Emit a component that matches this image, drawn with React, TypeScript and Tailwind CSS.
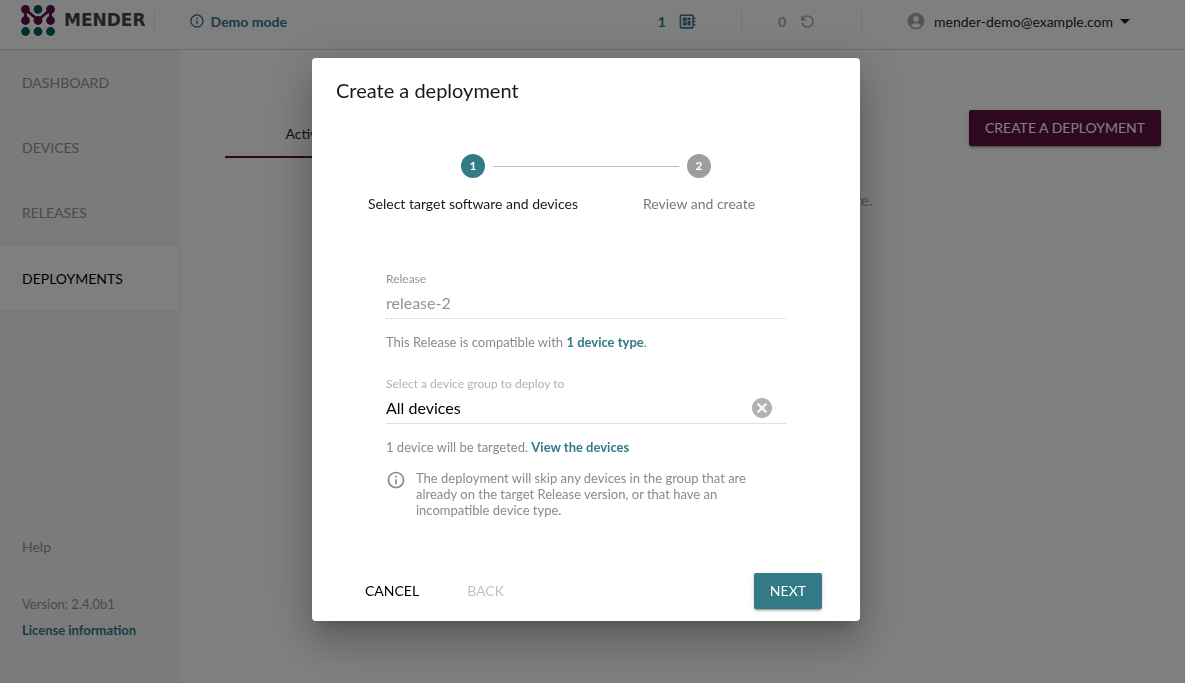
import React, { useState } from 'react';
import {
  MdAccountCircle,
  MdArrowDropDown,
  MdCancel,
  MdDeveloperBoard,
  MdInfoOutline,
  MdRefresh,
} from 'react-icons/md';

const navItems = ['Dashboard', 'Devices', 'Releases', 'Deployments'];

function Logo() {
  return (
    <a href="#home" aria-label="Mender" className="flex items-center gap-2">
      <svg width="36" height="34" viewBox="0 0 36 34" aria-hidden="true">
        <path d="M5.5 16.5V5.5L18 16L30.5 5.5V16.5" fill="none" stroke="#5d0f43" strokeWidth="2.8" />
        <g fill="#5d0f43">
          <circle cx="5.5" cy="5.3" r="4.4" />
          <circle cx="30.5" cy="5.3" r="4.4" />
          <circle cx="5.5" cy="16.5" r="4.4" />
          <circle cx="18" cy="16.5" r="4.4" />
          <circle cx="30.5" cy="16.5" r="4.4" />
        </g>
        <g fill="#015969">
          <circle cx="18" cy="5.3" r="4.4" />
          <circle cx="5.5" cy="27.5" r="4.4" />
          <circle cx="18" cy="27.5" r="4.4" />
          <circle cx="30.5" cy="27.5" r="4.4" />
        </g>
      </svg>
      <span className="font-['DejaVu_Sans'] text-[17px] font-bold text-[#444]">MENDER</span>
    </a>
  );
}

function Header() {
  return (
    <header className="flex h-[50px] items-start justify-between border-b border-[#d4d4d4] pt-[3px] pr-12 pl-5">
      <div className="flex h-9 items-center">
        <Logo />
        <span className="ml-2 h-6 w-px bg-[#eaeaea]" />
        <a href="#demo" className="ml-[34px] flex items-center gap-[6px] text-[14px] font-bold text-[#337a87]">
          <MdInfoOutline size={16} />
          Demo mode
        </a>
      </div>
      <div className="flex h-9 items-center">
        <a href="#devices" className="flex items-center gap-3 pr-11 text-[14px] font-bold text-[#337a87]">
          1
          <MdDeveloperBoard size={19} />
        </a>
        <span className="h-6 w-px bg-[#eaeaea]" />
        <a href="#deployments" className="flex items-center gap-3 pr-11 pl-9 text-[14px] font-bold text-[#aaa]">
          0
          <MdRefresh size={19} className="-scale-x-100" />
        </a>
        <span className="h-6 w-px bg-[#eaeaea]" />
        <button type="button" className="ml-11 flex items-center text-[14px] text-black/90">
          <MdAccountCircle size={20} className="mr-2 text-[#aaa]" />
          mender-demo@example.com
          <MdArrowDropDown size={24} />
        </button>
      </div>
    </header>
  );
}

function Sidebar() {
  return (
    <aside className="flex w-[180px] shrink-0 flex-col justify-between border-r border-[#f0f0f0] bg-[#f7f7f7]">
      <nav className="flex flex-col uppercase">
        {navItems.map(item => (
          <a
            key={item}
            href={`#${item.toLowerCase()}`}
            className={
              item === 'Deployments'
                ? 'flex h-[67px] items-center border-y border-[#f0f0f0] bg-white px-[22px] text-[14px] text-black'
                : 'flex h-[65px] items-center px-[22px] text-[14px] text-[#949494]'
            }
          >
            {item}
          </a>
        ))}
      </nav>
      <div className="flex flex-col px-[22px] pb-11 text-[13px] text-[#949494]">
        <a href="#help" className="mb-[38px] text-[14px] leading-5">
          Help
        </a>
        <span className="mb-2 leading-[18px]">Version: 2.4.0b1</span>
        <a href="#license" className="leading-[18px] font-bold text-[#337a87]">
          License information
        </a>
      </div>
    </aside>
  );
}

function Deployments() {
  return (
    <main className="flex-1 pt-[60px] pr-6 pl-[45px]">
      <div className="flex items-start justify-between">
        <div role="tablist" className="flex">
          <button
            type="button"
            role="tab"
            aria-selected="true"
            className="h-12 w-40 border-b-2 border-[#5d0f43] text-[14px] text-black/90"
          >
            Active
          </button>
        </div>
        <button
          type="button"
          className="h-9 rounded-[2px] bg-[#5d0f43] px-4 pb-px text-[14px] text-white uppercase shadow-[0_3px_1px_-2px_rgba(0,0,0,0.2),0_2px_2px_0_rgba(0,0,0,0.14),0_1px_5px_0_rgba(0,0,0,0.12)]"
        >
          Create a deployment
        </button>
      </div>
      <p className="mt-[30px] text-center text-[16px] leading-6 text-[#aaa]">
        Pending and ongoing deployments will appear here.
      </p>
    </main>
  );
}

function Step({ number, label, active }: { number: number; label: string; active?: boolean }) {
  return (
    <li className="relative flex flex-1 flex-col items-center">
      {number > 1 && <span className="absolute top-3 right-[133px] h-px w-[186px] bg-[#bdbdbd]" />}
      <span
        className={
          active
            ? 'flex size-6 items-center justify-center rounded-full bg-[#337a87] text-[12px] font-bold text-white'
            : 'flex size-6 items-center justify-center rounded-full bg-[#9e9e9e] text-[12px] font-bold text-white'
        }
      >
        {number}
      </span>
      <span
        className={
          active ? 'mt-4 text-[14px] leading-5 text-black/90' : 'mt-4 text-[14px] leading-5 text-black/55'
        }
      >
        {label}
      </span>
    </li>
  );
}

function DeploymentDialog() {
  const [group, setGroup] = useState('All devices');
  return (
    <div className="fixed inset-0 z-10 flex items-center justify-center bg-black/50 pr-[13px] pb-1">
      <section
        role="dialog"
        aria-labelledby="dialog-title"
        className="w-[548px] rounded-[4px] bg-white pb-3 shadow-[0_11px_15px_-7px_rgba(0,0,0,0.2),0_24px_38px_3px_rgba(0,0,0,0.14),0_9px_46px_8px_rgba(0,0,0,0.12)]"
      >
        <h2 id="dialog-title" className="px-6 pt-4 pb-4 text-[20px] leading-8 text-black/90">
          Create a deployment
        </h2>
        <ol className="mt-8 flex px-12">
          <Step number={1} label="Select target software and devices" active />
          <Step number={2} label="Review and create" />
        </ol>
        <form className="mx-auto mt-[57px] flex w-[400px] flex-col text-[13px] leading-4 text-[#8a8a8a]">
          <label htmlFor="release" className="text-[12px] text-[#949494]">
            Release
          </label>
          <input
            id="release"
            disabled
            defaultValue="release-2"
            className="h-8 border-b border-dotted border-[#ccc] text-[16px] text-[#949494]"
          />
          <p className="mt-[15px]">
            This Release is compatible with{' '}
            <a href="#types" className="font-bold text-[#337a87]">
              1 device type
            </a>
            .
          </p>
          <label htmlFor="group" className="mt-[26px] text-[12px] text-[#b2b2b2]">
            Select a device group to deploy to
          </label>
          <div className="flex h-8 items-center border-b border-[#e0e0e0] pr-3">
            <input
              id="group"
              value={group}
              onChange={event => setGroup(event.target.value)}
              className="flex-1 text-[16px] text-black outline-none"
            />
            <button type="button" aria-label="Clear" onClick={() => setGroup('')} className="text-[#b2b2b2]">
              <MdCancel size={24} />
            </button>
          </div>
          <p className="mt-[15px]">
            1 device will be targeted.{' '}
            <a href="#view" className="font-bold text-[#337a87]">
              View the devices
            </a>
          </p>
          <div className="mt-[15px] flex items-start gap-[10px]">
            <MdInfoOutline size={20} className="shrink-0" />
            <p className="w-[340px]">
              The deployment will skip any devices in the group that are already on the target Release version,
              or that have an incompatible device type.
            </p>
          </div>
        </form>
        <div className="mt-[55px] flex items-center pr-[38px] pl-[45px] text-[14px] uppercase">
          <button type="button" className="h-9 px-2 pb-px text-black uppercase">
            Cancel
          </button>
          <button type="button" disabled className="ml-8 h-9 px-2 pb-px text-black/25 uppercase">
            Back
          </button>
          <button
            type="button"
            className="ml-auto h-9 rounded-[2px] bg-[#337a87] px-4 pb-px text-white uppercase shadow-[0_3px_1px_-2px_rgba(0,0,0,0.2),0_2px_2px_0_rgba(0,0,0,0.14),0_1px_5px_0_rgba(0,0,0,0.12)]"
          >
            Next
          </button>
        </div>
      </section>
    </div>
  );
}

export default function App() {
  return (
    <div className="flex min-h-screen flex-col bg-white font-[Lato,sans-serif]">
      <Header />
      <div className="flex flex-1">
        <Sidebar />
        <Deployments />
      </div>
      <DeploymentDialog />
    </div>
  );
}
